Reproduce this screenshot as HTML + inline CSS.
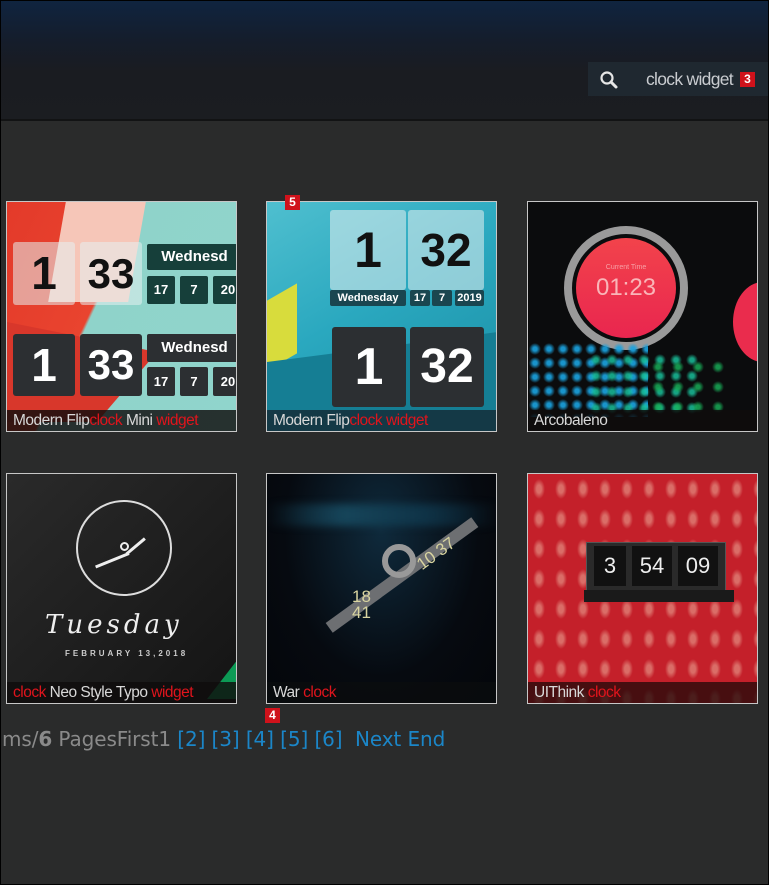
<!DOCTYPE html>
<html><head><meta charset="utf-8"><style>
*{margin:0;padding:0;box-sizing:border-box}
body{width:769px;height:885px;background:#2a2b2b;overflow:hidden;position:relative;font-family:"Liberation Sans",sans-serif}
#frame{position:absolute;inset:0;border:1px solid #000;pointer-events:none;z-index:20}
#hdr{position:absolute;left:0;top:0;width:769px;height:121px;background:linear-gradient(#0f2440 0%,#151d2b 35%,#1a1c21 60%,#1b1d21 100%);border-bottom:2px solid #121314}
#search{position:absolute;left:588px;top:62px;width:181px;height:34px;background:#1f2830}
#search span{position:absolute;left:58px;top:7px;color:#c9ccd0;font-size:17.5px;letter-spacing:-0.7px}
.badge{position:absolute;background:#d0121b;color:#fff;font-weight:bold;font-size:12px;width:15px;height:15px;text-align:center;line-height:15px}
.card{position:absolute;width:231px;height:231px;border:1px solid #c7c7c7;overflow:hidden}
.cap{position:absolute;left:0;right:0;bottom:0;height:21px;background:rgba(15,12,12,.82);color:#d8d8d8;font-size:15.5px;padding-left:6px;line-height:21px;letter-spacing:-0.5px;white-space:nowrap}
.r{color:#e0141c}
.flip{position:absolute;border-radius:3px;color:#111;font-weight:bold;text-align:center;font-family:"Liberation Sans",sans-serif}
.dk{background:#2c2f32;color:#fff}
.lt{background:rgba(230,240,240,.55);color:#111}
.tl{position:absolute;background:#163f3a;color:#fff;font-weight:bold;font-size:13px;text-align:center;border-radius:2px}
#pg{position:absolute;left:2px;top:727px;font-size:20px;color:#8a8a8a;white-space:nowrap;font-family:"DejaVu Sans",sans-serif;letter-spacing:-0.1px;word-spacing:0px}
#pg a{color:#1b86c8}
</style></head><body>
<div id="frame"></div>
<div id="hdr"></div>
<div id="search">
<svg style="position:absolute;left:10px;top:7px" width="22" height="22" viewBox="0 0 22 22"><circle cx="9" cy="9" r="5.5" fill="none" stroke="#e6e6e6" stroke-width="2.2"/><line x1="13" y1="13" x2="18" y2="18" stroke="#e6e6e6" stroke-width="3" stroke-linecap="round"/></svg>
<span>clock widget</span></div>
<div class="badge" style="left:740px;top:72px">3</div>

<div class="card" style="left:6px;top:201px;background:linear-gradient(115deg,#e33a2a 0%,#e9442f 40%,#8fd3ca 41%,#90d5cc 100%)">
<div style="position:absolute;left:50px;top:0;width:80px;height:100px;background:#f6c6b8;transform:skewX(-10deg)"></div>
<div style="position:absolute;left:0;top:120px;width:150px;height:100px;background:#d8372b;clip-path:polygon(0 0,100% 30%,60% 100%,0 100%)"></div>
<div class="flip lt" style="left:6px;top:40px;width:62px;height:63px;font-size:46px;line-height:63px">1</div>
<div class="flip lt" style="left:73px;top:40px;width:62px;height:63px;font-size:42px;line-height:63px">33</div>
<div class="tl" style="left:140px;top:42px;width:95px;height:26px;line-height:26px;font-size:15px">Wednesd</div>
<div class="tl" style="left:140px;top:74px;width:28px;height:28px;line-height:28px">17</div>
<div class="tl" style="left:173px;top:74px;width:28px;height:28px;line-height:28px">7</div>
<div class="tl" style="left:206px;top:74px;width:30px;height:28px;line-height:28px">20</div>
<div class="flip dk" style="left:6px;top:132px;width:62px;height:62px;font-size:46px;line-height:62px">1</div>
<div class="flip dk" style="left:73px;top:132px;width:62px;height:62px;font-size:42px;line-height:62px">33</div>
<div class="tl" style="left:140px;top:132px;width:95px;height:28px;line-height:28px;font-size:15px;background:#2c2f32">Wednesd</div>
<div class="tl" style="left:140px;top:165px;width:28px;height:29px;line-height:29px;background:#2c2f32">17</div>
<div class="tl" style="left:173px;top:165px;width:28px;height:29px;line-height:29px;background:#2c2f32">7</div>
<div class="tl" style="left:206px;top:165px;width:30px;height:29px;line-height:29px;background:#2c2f32">20</div>
<div class="cap">Modern Flip<span class="r">clock</span> Mini <span class="r">widget</span></div>
</div>

<div class="card" style="left:266px;top:201px;background:linear-gradient(150deg,#4fbfcf 0%,#2aa8bf 45%,#1a8da3 100%)">
<div style="position:absolute;left:0;top:90px;width:30px;height:70px;background:#d8dc3c;transform:skewY(-30deg)"></div>
<div style="position:absolute;left:0;top:130px;width:231px;height:100px;background:#157e94;clip-path:polygon(0 30%,100% 0,100% 100%,0 100%)"></div>
<div class="flip lt" style="left:63px;top:8px;width:76px;height:80px;font-size:50px;line-height:80px">1</div>
<div class="flip lt" style="left:141px;top:8px;width:76px;height:80px;font-size:46px;line-height:80px">32</div>
<div class="tl" style="left:63px;top:88px;width:76px;height:16px;line-height:16px;font-size:11px;background:#1a4650">Wednesday</div>
<div class="tl" style="left:143px;top:88px;width:20px;height:16px;line-height:16px;font-size:11px;background:#1a4650">17</div>
<div class="tl" style="left:165px;top:88px;width:20px;height:16px;line-height:16px;font-size:11px;background:#1a4650">7</div>
<div class="tl" style="left:188px;top:88px;width:29px;height:16px;line-height:16px;font-size:11px;background:#1a4650">2019</div>
<div class="flip dk" style="left:65px;top:125px;width:74px;height:80px;font-size:52px;line-height:80px">1</div>
<div class="flip dk" style="left:143px;top:125px;width:74px;height:80px;font-size:48px;line-height:80px">32</div>
<div class="cap" style="background:rgba(20,40,50,.8)">Modern Flip<span class="r">clock</span> <span class="r">widget</span></div>
</div>
<div class="badge" style="left:285px;top:195px">5</div>

<div class="card" style="left:527px;top:201px;background:#0b0c0d">
<div style="position:absolute;left:36px;top:24px;width:124px;height:124px;border-radius:50%;border:8px solid #9a9a9a"></div>
<div style="position:absolute;left:48px;top:36px;width:100px;height:100px;border-radius:50%;background:linear-gradient(#f2434b,#e9264f)"></div>
<div style="position:absolute;left:48px;top:62px;width:100px;text-align:center;color:#f7a0a5;font-size:7px">Current Time</div>
<div style="position:absolute;left:48px;top:72px;width:100px;text-align:center;color:#f9b5b8;font-size:24px">01:23</div>
<div style="position:absolute;left:205px;top:80px;width:60px;height:80px;border-radius:50%;background:#ea2c4d"></div>
<div style="position:absolute;left:0;top:140px;width:120px;height:75px;background:radial-gradient(circle,#1aa3e0 2px,transparent 6px) 0 0/14px 14px;opacity:.9"></div>
<div style="position:absolute;left:60px;top:150px;width:110px;height:65px;background:radial-gradient(circle,#19c8a0 2px,transparent 6px) 0 0/16px 16px;opacity:.8"></div>
<div style="position:absolute;left:120px;top:155px;width:80px;height:60px;background:radial-gradient(circle,#18b35a 2px,transparent 6px) 0 0/20px 20px;opacity:.8"></div>
<div class="cap">Arcobaleno</div>
</div>

<div class="card" style="left:6px;top:473px;background:linear-gradient(135deg,#2a2a2a,#141414)">
<div style="position:absolute;left:69px;top:26px;width:96px;height:96px;border-radius:50%;border:2px solid #ddd"></div>
<div style="position:absolute;left:86px;top:78px;width:36px;height:3px;background:#eee;transform:rotate(-22deg);transform-origin:right center"></div>
<div style="position:absolute;left:118px;top:56px;width:3px;height:24px;background:#eee;transform:rotate(50deg);transform-origin:bottom center"></div>
<div style="position:absolute;left:113px;top:68px;width:9px;height:9px;border-radius:50%;border:2px solid #eee;background:#222"></div>
<div style="position:absolute;left:38px;top:136px;color:#eee;font-family:'DejaVu Serif',serif;font-style:italic;font-size:26px;letter-spacing:4px">Tuesday</div>
<div style="position:absolute;left:58px;top:175px;color:#ccc;font-size:8px;font-weight:bold;letter-spacing:3px">FEBRUARY 13,2018</div>
<div style="position:absolute;left:200px;top:185px;width:31px;height:40px;background:#0c9a55;clip-path:polygon(100% 0,100% 100%,0 100%)"></div>
<div class="cap"><span class="r">clock</span> Neo Style Typo <span class="r">widget</span></div>
</div>

<div class="card" style="left:266px;top:473px;background:radial-gradient(ellipse at 50% 25%,#0f2a3c 0%,#060a10 60%,#04060a 100%)">
<div style="position:absolute;left:0;top:30px;width:231px;height:22px;background:linear-gradient(90deg,transparent,#16455a,#0f3448,transparent);filter:blur(4px)"></div>
<div style="position:absolute;left:45px;top:95px;width:180px;height:12px;background:#6d6f72;transform:rotate(-36deg)"></div>
<div style="position:absolute;left:115px;top:70px;width:34px;height:34px;border-radius:50%;border:6px solid #999"></div>
<div style="position:absolute;left:148px;top:70px;color:#d8d4a0;font-size:17px;transform:rotate(-36deg)">10 37</div>
<div style="position:absolute;left:85px;top:115px;color:#d8d4a0;font-size:17px;line-height:16px">18<br>41</div>
<div class="cap" style="background:rgba(10,12,14,.8)">War <span class="r">clock</span></div>
</div>
<div class="badge" style="left:265px;top:708px">4</div>

<div class="card" style="left:527px;top:473px;background:#c4202a">
<div style="position:absolute;inset:0;background:radial-gradient(ellipse 6px 10px,#e8a090 40%,transparent 100%) 0 0/22px 30px;opacity:.6"></div>
<div style="position:absolute;left:58px;top:68px;width:140px;height:50px;background:#2a2a2a;border:1px solid #555"></div>
<div style="position:absolute;left:66px;top:72px;width:32px;height:40px;background:#111;color:#eee;font-size:22px;text-align:center;line-height:40px">3</div>
<div style="position:absolute;left:104px;top:72px;width:40px;height:40px;background:#111;color:#eee;font-size:22px;text-align:center;line-height:40px">54</div>
<div style="position:absolute;left:150px;top:72px;width:40px;height:40px;background:#111;color:#eee;font-size:22px;text-align:center;line-height:40px">09</div>
<div style="position:absolute;left:56px;top:116px;width:150px;height:12px;background:#1a1a1a"></div>
<div class="cap" style="background:rgba(40,10,10,.8)">UIThink <span class="r">clock</span></div>
</div>

<div id="pg">ms/<b>6</b> PagesFirst1 <a>[2]</a> <a>[3]</a> <a>[4]</a> <a>[5]</a> <a>[6]</a> &nbsp;<a>Next</a> <a>End</a></div>
</body></html>
